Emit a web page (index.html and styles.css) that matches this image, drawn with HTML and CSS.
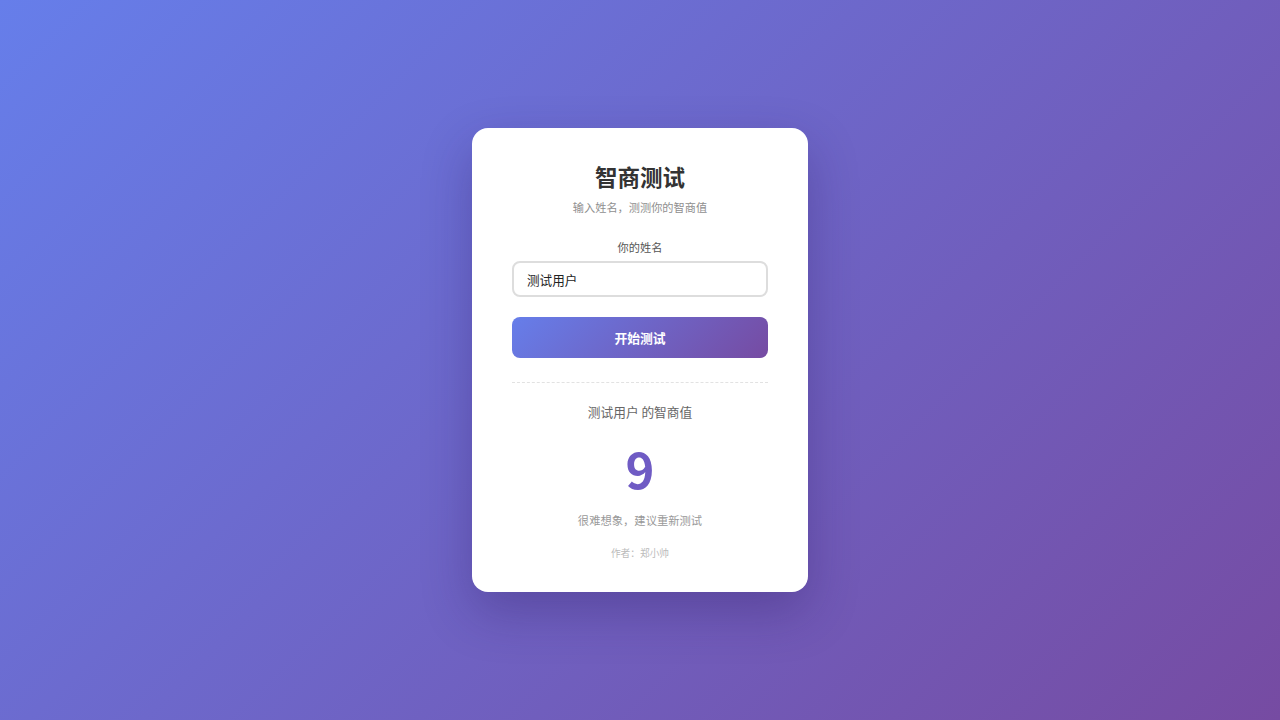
FILE: index.html
```html
<!DOCTYPE html>
<html lang="zh-CN">
<head>
<meta charset="utf-8">
<title>智商测试</title>
<link rel="stylesheet" href="styles.css">
</head>
<body>
<div class="card">
  <h1 class="title">智商测试</h1>
  <p class="subtitle">输入姓名，测测你的智商值</p>
  <label class="label" for="name">你的姓名</label>
  <input class="input" id="name" type="text" value="测试用户">
  <button class="btn">开始测试</button>
  <div class="divider"></div>
  <div class="result-name">测试用户 的智商值</div>
  <div class="score">9</div>
  <div class="comment">很难想象，建议重新测试</div>
  <div class="author">作者：郑小帅</div>
</div>
</body>
</html>
```
FILE: styles.css
```css
* { box-sizing: border-box; }
html, body { margin: 0; height: 100%; }
body {
  font-family: "Noto Sans CJK SC", "Noto Sans", sans-serif;
  background: linear-gradient(135deg, #667eea 0%, #764ba2 100%);
  display: flex;
  align-items: center;
  justify-content: center;
}
.card {
  width: 336px;
  background: #fff;
  border-radius: 16px;
  padding: 32px 40px 31px;
  box-shadow: 0 20px 50px rgba(40, 20, 90, 0.3);
  display: flex;
  flex-direction: column;
  align-items: stretch;
  text-align: center;
}
.title {
  margin: 0;
  font-size: 22.5px;
  line-height: 32px;
  font-weight: 700;
  color: #333;
}
.subtitle {
  margin: 6px 0 0;
  font-size: 11.2px;
  line-height: 18px;
  color: #8f8f8f;
}
.label {
  margin-top: 22px;
  font-size: 11.2px;
  line-height: 18px;
  color: #555;
}
.input {
  margin-top: 5px;
  height: 36px;
  border: 2px solid #ddd;
  border-radius: 8px;
  padding: 0 13px;
  font-family: inherit;
  font-size: 12.6px;
  color: #222;
  outline: none;
}
.btn {
  margin-top: 20px;
  height: 41px;
  border: none;
  border-radius: 8px;
  background: linear-gradient(135deg, #667eea 0%, #764ba2 100%);
  color: #fff;
  font-family: inherit;
  font-size: 12.8px;
  font-weight: 700;
}
.divider {
  margin-top: 24px;
  border-top: 1px dashed #e2e2e2;
}
.result-name {
  margin-top: 19px;
  font-size: 12.7px;
  line-height: 20px;
  color: #666;
}
.score {
  margin-top: 16px;
  font-size: 49px;
  line-height: 60px;
  font-weight: 700;
  color: #6f5bc4;
}
.comment {
  margin-top: 13px;
  font-size: 11.3px;
  line-height: 18px;
  color: #999;
}
.author {
  margin-top: 16px;
  font-size: 9.7px;
  line-height: 16px;
  color: #bbb;
}
```
